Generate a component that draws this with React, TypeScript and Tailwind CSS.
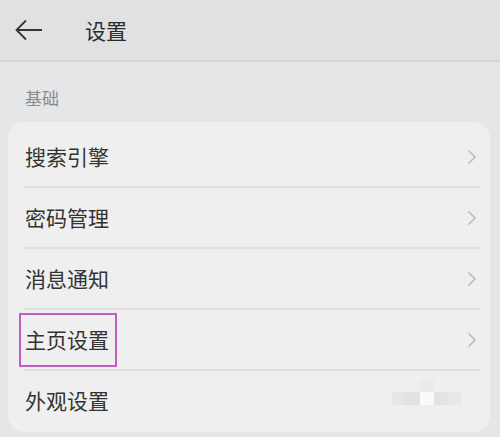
import React from "react";

const items = ["搜索引擎", "密码管理", "消息通知", "主页设置", "外观设置"];

function Chevron() {
  return (
    <svg width="10" height="16" viewBox="0 0 10 16" fill="none">
      <path d="M1.5 1.5 L8 8 L1.5 14.5" stroke="#b5b5b5" strokeWidth="1.4" />
    </svg>
  );
}

export default function App() {
  return (
    <div
      className="w-[500px] h-[437px] overflow-hidden bg-[#e5e6e8] relative"
      style={{ fontFamily: '"Noto Sans CJK SC", "Noto Sans", sans-serif' }}
    >
      <div className="h-[62px] bg-[#e0e1e3] flex items-center border-b-2 border-[#d4d5d7]">
        <div className="w-[85px] pl-[15px] flex items-center">
          <svg width="28" height="22" viewBox="0 0 28 22" fill="none">
            <path d="M27 11 H2 M11 1.5 L1.5 11 L11 20.5" stroke="#333" strokeWidth="1.8" />
          </svg>
        </div>
        <span className="text-[21px] text-[#2a2a2a] leading-none">设置</span>
      </div>
      <div className="h-[60px] pl-[25px] pt-[27px] text-[17px] text-[#8a8a8a] leading-none">
        基础
      </div>
      <div className="ml-[8px] w-[482px] h-[310px] bg-[#efefef] rounded-[16px] pt-[5px]">
        {items.map((t, i) => (
          <div key={t}>
            <div className="relative h-[59px] flex items-center justify-between pl-[17px] pr-[13px]">
              <span className="text-[21px] text-[#333] leading-none">{t}</span>
              {i < 4 && <Chevron />}
              {i === 3 && (
                <div className="absolute left-[11px] top-[3px] w-[98px] h-[54px] border-2 border-[#c45cc4]" />
              )}
            </div>
            {i < 4 && <div className="h-[2px] bg-[#e0e0e0] ml-[16px] mr-[10px]" />}
          </div>
        ))}
      </div>
      <div className="absolute left-[392px] top-[392px] flex">
        <div className="w-[13px] h-[13px] bg-[#e6e6e6]" />
        <div className="w-[15px] h-[13px] bg-[#e2e2e2]" />
        <div className="w-[14px] h-[13px] bg-[#fafafa]" />
        <div className="w-[14px] h-[13px] bg-[#e3e3e3]" />
        <div className="w-[14px] h-[13px] bg-[#e8e8e8]" />
      </div>
      <div className="absolute left-[420px] top-[379px] w-[14px] h-[13px] bg-[#ebebeb]" />
    </div>
  );
}
